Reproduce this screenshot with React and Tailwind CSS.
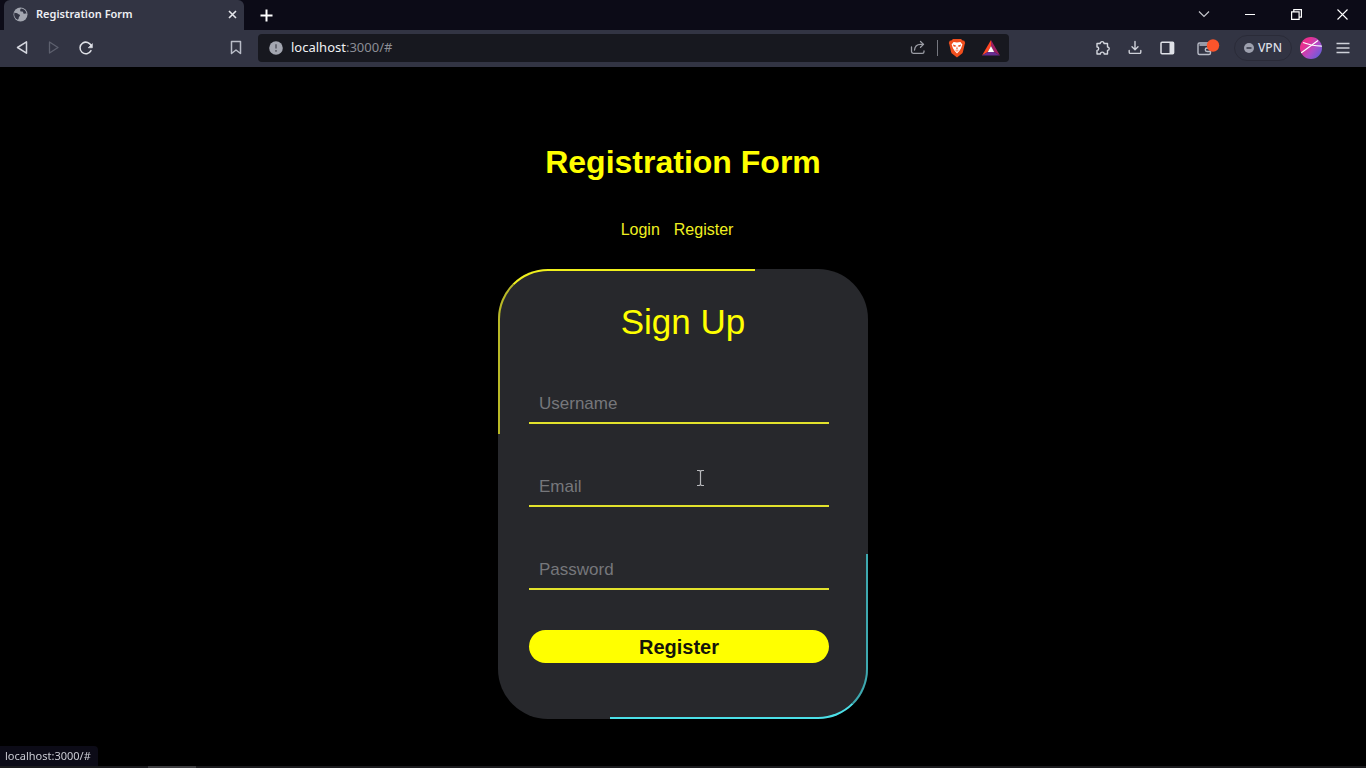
import React from "react";

const iconButton = "flex h-8 w-8 items-center justify-center";

function GlobeIcon() {
  return (
    <svg width="15" height="15" viewBox="0 0 15 15" aria-hidden="true">
      <circle cx="7.5" cy="7.5" r="7" fill="#a3a6b0" />
      <path d="M1.6 5.6c1.2.9 2.4.3 3.3 1.2.8.8 2.1.5 2.1 1.7 0 1-1.2 1-1.2 2 0 .9-.3 1.7-.9 2.2C2.3 11.600 1 9.500 1.200 7z" fill="#323443" />
      <path d="M7.2 2c.8.9-.6 1.500.2 2.300.8.7 1.600-.3 2.400.5.7.8.2 1.700 1.200 2 1 .2 1.500-.4 2.500-.1C13.300 4 11.300 1.900 8.700 1.400z" fill="#323443" />
    </svg>
  );
}

function BackIcon({ forward }) {
  return (
    <svg width="13" height="15" viewBox="0 0 13 15" fill="none" aria-hidden="true">
      {forward ? (
        <path d="M1.500 2v11l8.500-5.500z" stroke="#5d606e" strokeWidth="1.300" strokeLinejoin="round" />
      ) : (
        <path d="M10.500 1.800v11.400L1.500 7.500z" stroke="#d4d6de" strokeWidth="1.500" strokeLinejoin="round" />
      )}
    </svg>
  );
}

function ReloadIcon() {
  return (
    <svg width="16" height="16" viewBox="0 0 16 16" fill="none" aria-hidden="true">
      <path d="M13 10.600A5.800 5.800 0 1 1 13.300 6" stroke="#dfe1e7" strokeWidth="1.500" strokeLinecap="round" />
      <path d="M14.400 3.600v4.200h-4.200z" fill="#dfe1e7" stroke="#dfe1e7" strokeWidth=".6" strokeLinejoin="round" />
    </svg>
  );
}

function BookmarkIcon() {
  return (
    <svg width="12" height="15" viewBox="0 0 12 15" fill="none" aria-hidden="true">
      <path d="M1.500 1.500h9v12L6 10l-4.500 3.500z" stroke="#b9bcc7" strokeWidth="1.500" strokeLinejoin="round" />
    </svg>
  );
}

function ShareIcon() {
  return (
    <svg width="16" height="15" viewBox="0 0 16 15" fill="none" stroke="#9b9da5" strokeWidth="1.300" strokeLinecap="round" strokeLinejoin="round" aria-hidden="true">
      <path d="M1.500 7v4.500c0 1.200.6 1.800 1.800 1.800h9c1 0 1.700-.6 1.700-1.600V11" />
      <path d="M4.500 10c.4-3.500 2.500-5.600 6-5.600h3" />
      <path d="m10.500 1.500 3 2.900-3 2.900" />
    </svg>
  );
}

function LionIcon() {
  return (
    <svg width="18" height="20" viewBox="0 0 18 20" aria-hidden="true">
      <path d="M5 1h8l1.600 1.500 1.700.2.900 2.300-.5 1.300-1.800 7.600c-.2.900-.7 1.600-1.500 2.100L9 19.500 4.600 16c-.8-.5-1.300-1.200-1.500-2.100L1.300 6.300.8 5l.9-2.300 1.700-.2z" fill="#f04e1d" />
      <path d="M5.600 4 9 4.600l3.400-.6 2 2.600-1.500 4-1.400 2.200L9 15.500l-2.500-2.700-1.400-2.200-1.500-4z" fill="#fff" />
      <path d="M5 6.600 8 7.600 7.300 9 5.400 8.200zM13 6.600 10 7.600l.7 1.400 1.900-.8zM9 8l.7 3-.7.700-.7-.7zM6.700 11.500 9 12.700l2.300-1.200L9 13.700z" fill="#f04e1d" />
    </svg>
  );
}

function TriangleIcon() {
  return (
    <svg width="18" height="16" viewBox="0 0 18 16" aria-hidden="true">
      <path d="M9 0 0 15.500 5.800 12 9 6z" fill="#ff4724" />
      <path d="M9 0v6l3.200 6 5.800 3.500z" fill="#9e1f63" />
      <path d="M0 15.500 5.800 12h6.400l5.800 3.500z" fill="#662d91" />
      <path d="M9 6 5.800 12h6.400z" fill="#fff" />
    </svg>
  );
}

function PuzzleIcon() {
  return (
    <svg width="16" height="16" viewBox="0 0 16 16" fill="none" stroke="#d4d6de" strokeWidth="1.400" strokeLinejoin="round" aria-hidden="true">
      <path d="M2 3.500h3.200a1.900 1.900 0 0 1 3.800 0h3.500V7a1.700 1.700 0 0 1 0 3.400V14H9.200a1.900 1.900 0 0 0-3.800 0H2v-3.600a1.700 1.700 0 0 0 0-3.400z" />
    </svg>
  );
}

function DownloadIcon() {
  return (
    <svg width="14" height="15" viewBox="0 0 14 15" fill="none" stroke="#cfd1d9" strokeWidth="1.400" strokeLinecap="round" strokeLinejoin="round" aria-hidden="true">
      <path d="M7 1.500v8M4 6.700l3 3 3-3M1.200 10.500v1.700c0 .8.4 1.200 1.200 1.200h9.200c.8 0 1.200-.4 1.200-1.200v-1.700" />
    </svg>
  );
}

function PanelIcon() {
  return (
    <svg width="15" height="14" viewBox="0 0 15 14" aria-hidden="true">
      <rect x="1" y="1.200" width="12.600" height="11.600" rx="1" fill="none" stroke="#dfe1e7" strokeWidth="1.500" />
      <path d="M9.500 1h4v12h-4z" fill="#dfe1e7" />
    </svg>
  );
}

function WalletIcon() {
  return (
    <svg width="24" height="18" viewBox="0 0 24 18" fill="none" aria-hidden="true">
      <path d="M15 6H3.500M3.500 4H12M3.500 4A1.500 1.500 0 0 0 2 5.500V14c0 1 .5 1.500 1.500 1.500H13c1 0 1.500-.5 1.500-1.500v-1.500M14.500 9H11a1.700 1.700 0 0 0 0 3.500h3.500z" stroke="#b9bcc7" strokeWidth="1.400" strokeLinejoin="round" />
      <circle cx="17" cy="6.500" r="6.200" fill="#fb542b" />
    </svg>
  );
}

function AvatarIcon() {
  return (
    <svg width="22" height="22" viewBox="0 0 22 22" aria-hidden="true">
      <defs>
        <linearGradient id="avatar" x1="0" y1="0.200" x2="1" y2="1">
          <stop offset="0.200" stopColor="#e8308f" />
          <stop offset="0.550" stopColor="#b04bc8" />
          <stop offset="1" stopColor="#4b63dc" />
        </linearGradient>
        <clipPath id="avatar-clip">
          <circle cx="11" cy="11" r="11" />
        </clipPath>
      </defs>
      <g clipPath="url(#avatar-clip)">
        <path d="M0 0h22v22H0z" fill="url(#avatar)" />
        <path d="M3 5.500c5 2 11 3.200 19 3.700M1 16 18 3.500" stroke="#fff" strokeWidth="1.200" fill="none" />
      </g>
    </svg>
  );
}

function TitleBar() {
  return (
    <div className="flex h-[30px] items-stretch bg-[#0c0b17] pl-1 text-white">
      <div className="flex w-60 items-center rounded-t-md bg-[#323443] pr-1 pb-0.5 pl-[9px]">
        <GlobeIcon />
        <span className="ml-2 flex-1 text-[11px] font-semibold text-[#eeeff3]">Registration Form</span>
        <button type="button" aria-label="Close tab" className="flex h-4 w-4 items-center justify-center">
          <svg width="9" height="9" viewBox="0 0 9 9" aria-hidden="true">
            <path d="m1 1 7 7m0-7L1 8" stroke="#e4e5ea" strokeWidth="1.600" />
          </svg>
        </button>
      </div>
      <button type="button" aria-label="New tab" className="ml-1.5 flex w-8 items-center justify-center">
        <svg width="13" height="13" viewBox="0 0 13 13" aria-hidden="true">
          <path d="M6.500.5v12M.5 6.500h12" stroke="#fff" strokeWidth="2" />
        </svg>
      </button>
      <div className="ml-auto flex pb-0.5">
        <button type="button" aria-label="Search tabs" className="flex w-[46px] items-center justify-center">
          <svg width="12" height="8" viewBox="0 0 12 8" fill="none" aria-hidden="true">
            <path d="m1 1.500 5 5 5-5" stroke="#c5c6cc" strokeWidth="1.200" />
          </svg>
        </button>
        <button type="button" aria-label="Minimize" className="flex w-[46px] items-center justify-center">
          <svg width="10" height="10" viewBox="0 0 10 10" aria-hidden="true">
            <path d="M0 5.500h10" stroke="#fff" />
          </svg>
        </button>
        <button type="button" aria-label="Restore" className="flex w-[46px] items-center justify-center">
          <svg width="11" height="11" viewBox="0 0 11 11" fill="none" stroke="#fff" strokeWidth="1.200" aria-hidden="true">
            <path d="M.6 2.900h7.500v7.500H.6zM2.800 2.700V.6h7.600v7.500H8.300" />
          </svg>
        </button>
        <button type="button" aria-label="Close window" className="flex w-[47px] items-center justify-center">
          <svg width="11" height="11" viewBox="0 0 11 11" aria-hidden="true">
            <path d="m.5.5 10 10m0-10-10 10" stroke="#fff" strokeWidth="1.100" />
          </svg>
        </button>
      </div>
    </div>
  );
}

function Toolbar() {
  return (
    <div className="flex h-[37px] items-center bg-[#323443] pb-0.5">
      <div className="flex w-[258px] shrink-0 items-center pl-1.5">
        <button type="button" aria-label="Back" className={iconButton}><BackIcon /></button>
        <button type="button" aria-label="Forward" className={iconButton}><BackIcon forward /></button>
        <button type="button" aria-label="Reload" className={iconButton}><ReloadIcon /></button>
        <button type="button" aria-label="Bookmark this page" className="mr-1.5 ml-auto flex h-8 w-8 items-center justify-center"><BookmarkIcon /></button>
      </div>
      <div className="flex h-7 flex-1 items-center rounded bg-[#17181f] pr-1.5 pl-[11px]">
        <svg width="14" height="14" viewBox="0 0 14 14" aria-hidden="true">
          <circle cx="7" cy="7" r="6.800" fill="#a3a6b0" />
          <path d="M7 3.200v4.300M7 9v1.800" stroke="#5a5c66" strokeWidth="1.600" />
        </svg>
        <div className="ml-2 flex-1 text-[13px] text-[#8b8d95]">
          <span className="text-[#f1f2f5]">localhost</span>:3000/#
        </div>
        <button type="button" aria-label="Share" className="flex h-6 w-6 items-center justify-center"><ShareIcon /></button>
        <span className="ml-[7px] h-4 w-px bg-[#75777f]" />
        <button type="button" aria-label="Shields" className="ml-[7px] flex h-6 w-6 items-center justify-center"><LionIcon /></button>
        <button type="button" aria-label="Rewards" className="ml-2.5 flex h-6 w-6 items-center justify-center"><TriangleIcon /></button>
      </div>
      <div className="flex w-[357px] shrink-0 items-center justify-end pr-[7px]">
        <button type="button" aria-label="Extensions" className={iconButton}><PuzzleIcon /></button>
        <button type="button" aria-label="Downloads" className={iconButton}><DownloadIcon /></button>
        <button type="button" aria-label="Side panel" className={iconButton}><PanelIcon /></button>
        <button type="button" aria-label="Wallet" className="ml-[9px] flex h-8 w-8 items-center justify-center"><WalletIcon /></button>
        <button type="button" className="ml-2.5 flex h-[26px] w-[58px] items-center justify-center gap-1 rounded-full border border-[#2a2b38] text-xs font-medium text-[#dcdee5]">
          <svg width="10" height="10" viewBox="0 0 10 10" aria-hidden="true">
            <circle cx="5" cy="5" r="5" fill="#9da0ae" />
            <path d="M2.500 5h5" stroke="#323443" strokeWidth="1.500" />
          </svg>
          VPN
        </button>
        <button type="button" aria-label="Profile" className="ml-[3px] flex h-8 w-8 items-center justify-center"><AvatarIcon /></button>
        <button type="button" aria-label="Menu" className={iconButton}>
          <svg width="14" height="12" viewBox="0 0 14 12" aria-hidden="true">
            <path d="M.5 1.500h13M.5 6h13M.5 10.500h13" stroke="#cfd1d9" strokeWidth="1.500" />
          </svg>
        </button>
      </div>
    </div>
  );
}

function Field({ label, type }) {
  return (
    <input
      type={type}
      aria-label={label}
      placeholder={label}
      className="block h-10 w-full border-b-2 border-[#e2e22c] bg-transparent px-2.5 pt-0.5 text-[17px] text-white outline-none placeholder:text-[#76777b]"
    />
  );
}

function TextCursor() {
  return (
    <svg className="absolute top-[200px] left-[198px]" width="9" height="18" viewBox="0 0 9 18" fill="none" aria-hidden="true">
      <path d="M1 1.500h2.500l1 1 1-1H8M4.500 2.500v13M1 16.500h2.500l1-1 1 1H8" stroke="#b8b9bc" strokeWidth="1.200" />
    </svg>
  );
}

function SignUpCard() {
  return (
    <section className="relative mt-[27px] w-[370px] rounded-[50px] bg-[#27282c] px-[31px] pt-[33px] pb-14">
      <span className="pointer-events-none absolute top-0 left-0 h-[165px] w-[257px] rounded-tl-[50px] border-t-2 border-l-2 border-t-[#f0f01c] border-l-[#b9b926]" />
      <span className="pointer-events-none absolute right-0 bottom-0 h-[165px] w-[258px] rounded-br-[50px] border-r-2 border-b-2 border-r-[#3da9b0] border-b-[#4be0e8]" />
      <TextCursor />
      <h2 className="text-center text-[35px] leading-10 text-[#ffff00]">Sign Up</h2>
      <form className="mt-[42px] w-[300px]" onSubmit={(event) => event.preventDefault()}>
        <div className="flex flex-col gap-[43px]">
          <Field label="Username" type="text" />
          <Field label="Email" type="email" />
          <Field label="Password" type="password" />
        </div>
        <button type="submit" className="mt-10 flex h-[33px] w-full items-center justify-center rounded-full bg-[#ffff00] text-xl font-bold text-[#15150a]">
          Register
        </button>
      </form>
    </section>
  );
}

export default function App() {
  return (
    <div className="flex min-h-screen flex-col bg-black">
      <header className="font-['Noto_Sans',sans-serif]">
        <TitleBar />
        <Toolbar />
      </header>
      <main className="flex flex-1 flex-col items-center pt-[77px] font-['Liberation_Sans',sans-serif]">
        <h1 className="text-[32px] leading-9 font-bold text-[#ffff00]">Registration Form</h1>
        <nav className="mt-[38px] flex gap-3.5 pr-3 text-base text-[#f0f020]">
          <a href="#">Login</a>
          <a href="#">Register</a>
        </nav>
        <SignUpCard />
      </main>
      <footer className="fixed bottom-0 left-0 w-full font-['Noto_Sans',sans-serif]">
        <div className="flex h-5 w-[98px] items-center rounded-tr bg-[#0c0b17] pl-[5px] text-[11px] text-[#c9cad2]">localhost:3000/#</div>
        <div className="h-0.5 bg-[#1b1b1e] pl-[148px]">
          <div className="h-full w-12 bg-[#3d3d40]" />
        </div>
      </footer>
    </div>
  );
}
